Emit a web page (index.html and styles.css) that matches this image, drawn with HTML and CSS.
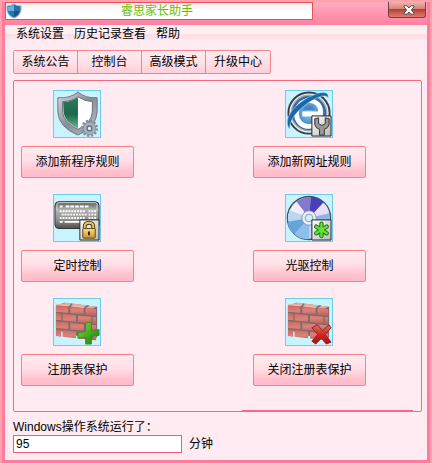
FILE: index.html
```html
<!DOCTYPE html>
<html lang="zh-CN">
<head>
<meta charset="utf-8">
<meta name="viewport" content="width=device-width, initial-scale=1">
<title>睿思家长助手</title>
<link rel="stylesheet" href="styles.css">
</head>
<body>
<svg class="defs" aria-hidden="true">
  <defs>
    <linearGradient id="silver" x1="0" y1="0" x2="1" y2="1"><stop offset="0" stop-color="#d8dce2"/><stop offset=".5" stop-color="#868c98"/><stop offset="1" stop-color="#c0c4cc"/></linearGradient>
    <linearGradient id="green" x1="0" y1="0" x2="0" y2="1"><stop offset="0" stop-color="#2c7a5c"/><stop offset=".55" stop-color="#1d6848"/><stop offset="1" stop-color="#62b890"/></linearGradient>
    <linearGradient id="plate" x1="0" y1="0" x2="0" y2="1"><stop offset="0" stop-color="#555"/><stop offset=".3" stop-color="#b4b4b2"/><stop offset=".7" stop-color="#8c8c8a"/><stop offset="1" stop-color="#4c4c4c"/></linearGradient>
    <linearGradient id="badge" x1="0" y1="0" x2="1" y2="1"><stop offset="0" stop-color="#fff"/><stop offset="1" stop-color="#b8b8b8"/></linearGradient>
    <linearGradient id="gold" x1="0" y1="0" x2="0" y2="1"><stop offset="0" stop-color="#f8e08c"/><stop offset="1" stop-color="#c89428"/></linearGradient>
    <radialGradient id="globe"><stop offset="0" stop-color="#8cc8f0"/><stop offset=".6" stop-color="#4f90cc"/><stop offset="1" stop-color="#28629c"/></radialGradient>
    <linearGradient id="brick" x1="0" y1="0" x2="1" y2="1"><stop offset="0" stop-color="#c86860"/><stop offset=".5" stop-color="#dc8078"/><stop offset="1" stop-color="#c05c56"/></linearGradient>
    <linearGradient id="plus" x1="0" y1="0" x2="1" y2="1"><stop offset="0" stop-color="#8cd848"/><stop offset=".6" stop-color="#3ca41c"/><stop offset="1" stop-color="#208010"/></linearGradient>
    <linearGradient id="cross" x1="0" y1="0" x2="0" y2="1"><stop offset="0" stop-color="#d87470"/><stop offset=".5" stop-color="#d02824"/><stop offset="1" stop-color="#a80c10"/></linearGradient>
    <g id="wall">
      <path d="M2 7l9-3 34 4v32l-5 3L2 32z" fill="#7c6c6a"/>
      <path d="M2 6l12-2 31 4-5 2z" fill="#e8aca0"/>
      <g fill="url(#brick)" transform="skewY(6)">
        <path d="M2 6h13v7H2zM17 6h14v7H17zM33 6h11v7H33z"/>
        <path d="M2 14.500h5.500v7H2zM9 14.500h14v7H9zM25 14.500h14v7H25zM40.500 14.500H44v7h-3.500z"/>
        <path d="M2 23h13v7H2zM17 23h14v7H17zM33 23h11v7H33z"/>
        <path d="M2 31.500h5.500v7H2zM9 31.500h14v7H9zM25 31.500h14v7H25zM40.500 31.500H44v7h-3.500z"/>
      </g>
      <path d="M2 6l14 1M18 7l13 2" stroke="#f0beb4"/>
      <path d="M16 8l3-3M32 9l4-2" stroke="#7c6c6a" stroke-width="1.500"/>
    </g>
  </defs>
</svg>
<main class="window">
  <header class="titlebar">
    <div class="caption">
      <svg class="logo" viewBox="0 0 16 16" aria-hidden="true"><path d="M1 3q4 0 7-2 3 2 7 2v4q-1 6-7 8Q2 13 1 7z" fill="#2374ae" stroke="#a8b4bc"/><path d="M2 4q4-1 6-2v6H2z" fill="#68b0dc"/><path d="M8 8h5.500Q12 12 8 14z" fill="#155488"/></svg>
      <h1 class="title">睿思家长助手</h1>
    </div>
    <button class="close" aria-label="关闭"><svg viewBox="0 0 12 10" aria-hidden="true"><path d="M1 .8h3L6 3l2-2.200h3V2L8.300 5 11 8v1.200H8L6 7 4 9.200H1V8l2.700-3L1 2z" fill="#fff" stroke="#50545c"/></svg></button>
  </header>
  <nav class="menu">
    <button>系统设置</button><button>历史记录查看</button><button>帮助</button>
  </nav>
  <div class="tabs">
    <button>系统公告</button><button>控制台</button><button>高级模式</button><button>升级中心</button>
  </div>
  <section class="panel">
    <div class="tool">
      <svg class="icon" viewBox="0 0 48 48" aria-hidden="true">
        <path d="M4 7q13 1 21-6 8 7 20 6v15q-1 16-20 24Q5 38 4 22z" fill="url(#silver)" stroke="#70747e"/>
        <path d="M9 11q10 0 16-5 7 5 15 5v11q-1 12-15 18Q10 33 9 22z" fill="#fff" stroke="#6b7078"/>
        <path d="M9.500 11.500q9 0 15.500-5V39Q11 33 10 22z" fill="url(#green)"/>
        <circle cx="37" cy="39" r="7.500" fill="none" stroke="#8490a0" stroke-width="3" stroke-dasharray="2.400 1.530"/>
        <circle cx="37" cy="39" r="6.500" fill="#a8b0bc" stroke="#848e9c"/>
        <circle cx="37" cy="39" r="2.500" fill="#d8f4fc" stroke="#68727e" stroke-width="1.500"/>
      </svg>
      <button class="action">添加新程序规则</button>
    </div>
    <div class="tool">
      <svg class="icon" viewBox="0 0 48 48" aria-hidden="true">
        <circle cx="24" cy="23" r="21.500" fill="#f4f6f8" stroke="#393d44" stroke-width="2"/>
        <circle cx="24" cy="23" r="18.500" fill="url(#globe)" stroke="#9ca8b4" stroke-width="1.500"/>
        <path d="M35 29q-3 8-11 8c-8 0-13-6-13-13 0-8 6-14 13-14 8 0 13 6 12 14H17" fill="none" stroke="#fff" stroke-width="5"/>
        <path d="M18 20q1-5 6-5t6 5z" fill="#4486c0"/>
        <path d="M4 40C-5 30 10 12 27 5c10-5 18-5 17 2-3-4-10-1-17 3C14 18 3 29 4 40z" fill="#1e67a6" stroke="#b4dcf4" stroke-width=".6"/>
        <path d="M27 26h20v21H27z" fill="url(#badge)" stroke="#202020"/>
        <path d="M30 29v6q1 4 5 5v6h5v-6q4-1 5-5v-6l-4-1v6l-3.500 2L34 34v-6z" fill="#989898" stroke="#303030"/>
      </svg>
      <button class="action">添加新网址规则</button>
    </div>
    <div class="tool">
      <svg class="icon" viewBox="0 0 48 48" aria-hidden="true">
        <rect x="1" y="7" width="46" height="28" rx="4" fill="url(#plate)" stroke="#303030"/>
        <path d="M3 16V10q0-2 2-2h38q2 0 2 2v6" fill="none" stroke="#d8d8d8"/>
        <g fill="none" stroke="#fff" stroke-width="2"><path d="M6 12h3M12 12h24" stroke-dasharray="4 1"/><path d="M6 17h27M8 20.500h26M6 24h27" stroke-dasharray="2 1"/><path d="M36 17h8M36 20.500h8M36 24h8" stroke-dasharray="2 1"/><path d="M6 28h3M11 28h20"/></g>
        <path d="M27 26h20v21H27z" fill="url(#badge)" stroke="#202020"/>
        <path d="M32 37v-4q0-4 4.500-4t4.500 4v4" fill="none" stroke="#4a3810" stroke-width="4"/><path d="M32 37v-4q0-4 4.500-4t4.500 4v4" fill="none" stroke="#e8c868" stroke-width="2"/>
        <rect x="30" y="35" width="13" height="10" rx="1" fill="url(#gold)" stroke="#5c4410"/><path d="M36.500 38v4" stroke="#302008" stroke-width="2"/>
      </svg>
      <button class="action">定时控制</button>
    </div>
    <div class="tool">
      <svg class="icon" viewBox="0 0 48 48" aria-hidden="true">
        <circle cx="24" cy="24" r="22.500" fill="#b8d4f0" stroke="#484c58" stroke-width="1.500"/>
        <path d="M24 24L11 7Q17 2 26 2z" fill="#8478d0"/><path d="M24 24L26 2q8 0 13 6z" fill="#4840b8"/><path d="M24 24L39 8q5 4 6 11z" fill="#e8e0f8"/><path d="M24 24l21-5q1 5 0 10z" fill="#8db8e6"/>
        <path d="M24 24L2 28Q2 37 9 41z" fill="#68a4dc"/><path d="M24 24L9 41q6 6 15 5z" fill="#8cc0ec"/><path d="M24 24L2 26Q2 14 11 7z" fill="#f0eefa"/><path d="M24 24L2 27Q2 20 4 16z" fill="#b8d8f0"/>
        <circle cx="24" cy="24" r="7.500" fill="#eef0f8" stroke="#8498b8"/><circle cx="24" cy="24" r="4" fill="#c9f3fe" stroke="#9098a8"/>
        <path d="M27 26h20v21H27z" fill="url(#badge)" stroke="#202020"/>
        <g stroke-linecap="round"><path d="M37 30v13M31.500 33l11 7M42.500 33l-11 7" stroke="#217018" stroke-width="4.500"/><path d="M37 30v13M31.500 33l11 7M42.500 33l-11 7" stroke="#62e038" stroke-width="2.500"/></g>
      </svg>
      <button class="action">光驱控制</button>
    </div>
    <div class="tool">
      <svg class="icon" viewBox="0 0 48 48" aria-hidden="true">
        <use href="#wall"/>
        <path d="M33 25l6-1v9l8-1v6l-8 1v8h-6v-7l-8 1v-6l8-1z" fill="url(#plus)" stroke="#388c20"/>
      </svg>
      <button class="action">注册表保护</button>
    </div>
    <div class="tool">
      <svg class="icon" viewBox="0 0 48 48" aria-hidden="true">
        <use href="#wall"/>
        <path d="M27 30l6-3 5 6 7-6 2 3-6 7 6 8-5 2-5-6-6 6-4-3 6-7z" fill="url(#cross)" stroke="#981c1c"/>
      </svg>
      <button class="action">关闭注册表保护</button>
    </div>
  </section>
  <footer class="status">
    <label for="uptime">Windows操作系统运行了：</label>
    <div class="uptime"><input id="uptime" type="text" value="95"><span>分钟</span></div>
  </footer>
</main>
</body>
</html>
```
FILE: styles.css
```css
* { box-sizing: border-box; }

body {
  margin: 0;
  font: 12px/16px "Liberation Sans", "Noto Sans CJK SC", sans-serif;
  color: #000;
}

button, input { font: inherit; color: inherit; }
button { padding: 0; white-space: nowrap; }

.defs { position: absolute; width: 0; height: 0; }

.window {
  display: flex;
  flex-direction: column;
  min-height: 100vh;
  border: solid #ff7c9f;
  border-width: 0 5px 5px;
  outline: 2px solid #ffa0ac;
  outline-offset: -2px;
  background: #ffebf1;
}

.titlebar {
  display: flex;
  justify-content: space-between;
  align-items: flex-start;
  height: 25px;
  padding-top: 2px;
  background: linear-gradient(#ffb4c4, #ff9cb4 40%, #ff80a2);
}

.caption {
  display: flex;
  align-items: center;
  width: 73%;
  height: 18px;
  border: 1px solid #e8505c;
  background: linear-gradient(#ffeaea, #fff 50%);
}

.logo { width: 16px; height: 16px; }

.title {
  flex: 1;
  margin: 0;
  padding-right: 20px;
  font-size: 12px;
  line-height: 16px;
  font-weight: 400;
  text-align: center;
  color: #62c400;
}

.close {
  display: flex;
  align-items: center;
  justify-content: center;
  width: 38px;
  height: 16px;
  margin-right: 1px;
  padding-left: 4px;
  border: 1px solid #70404c;
  border-top: 0;
  border-radius: 0 0 3px 3px;
  background: linear-gradient(#f0b4ac, #d88478 45%, #b84030 50%, #dc806c);
}

.close svg { width: 12px; height: 10px; }

.menu {
  display: flex;
  gap: 10px;
  height: 25px;
  padding: 1px 11px 0;
  background: linear-gradient(#fff0f0 9px, #ffdce5 9px, #ffe2ea 13px, #ffebf1 15px);
}

.menu button {
  height: 16px;
  border: 0;
  background: none;
}

.tabs {
  display: flex;
  width: max-content;
  margin: 0 8px 6px;
  border: 1px solid #f5858d;
  border-radius: 2px;
}

.tabs button {
  width: 64px;
  height: 22px;
  border: 0;
  border-right: 1px solid #f5858d;
  background: linear-gradient(#ffebef, #ffe1e8 50%, #ffced9);
}

.tabs button:last-child { border-right: 0; }

.panel {
  position: relative;
  display: grid;
  grid-template-columns: 232px auto;
  grid-auto-rows: 104px;
  justify-content: start;
  flex: 1;
  margin: 0 5px 0 8px;
  padding: 9px 7px;
  border: 1px solid #f5687d;
  border-radius: 2px;
}

/* Heavier accent over the right part of the lower edge */
.panel::after {
  content: "";
  position: absolute;
  right: 8px;
  bottom: -1px;
  width: 42%;
  height: 2px;
  background: #f5688a;
}

.tool {
  display: flex;
  flex-direction: column;
  gap: 8px;
}

.icon {
  width: 48px;
  height: 48px;
  margin-left: 32px;
  border: 1px solid #6ccdea;
  background: #c8f4ff;
}

.action {
  width: 113px;
  height: 32px;
  border: 1px solid #ff7c86;
  border-radius: 2px;
  background: linear-gradient(#ffecef, #ffdfe6 45%, #ffc1ce 80%, #ffb9c8);
}

.status { padding: 7px 8px; }
.status label { display: block; }

.uptime {
  display: flex;
  align-items: center;
  gap: 7px;
}

.uptime input {
  width: 169px;
  height: 18px;
  padding: 0 2px;
  border: 1px solid #f5587d;
  background: #fff;
}
```
